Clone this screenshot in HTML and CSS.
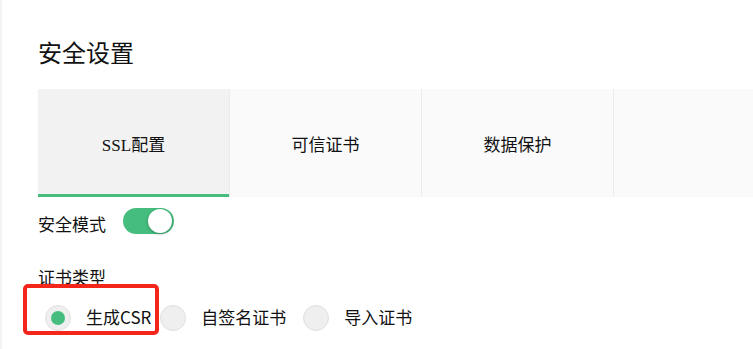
FILE: index.html
```html
<!DOCTYPE html>
<html lang="zh-CN">
<head>
<meta charset="utf-8">
<title>安全设置</title>
<link rel="stylesheet" href="styles.css">
</head>
<body>
<div class="page">
  <h1 class="title">安全设置</h1>
  <div class="tabs">
    <div class="tab active">SSL配置</div>
    <div class="tab">可信证书</div>
    <div class="tab">数据保护</div>
    <div class="tab"></div>
  </div>
  <div class="switch-row">
    <span class="label">安全模式</span>
    <span class="switch on"><span class="knob"></span></span>
  </div>
  <div class="section-label">证书类型</div>
  <div class="radios">
    <div class="radio first">
      <span class="dot checked"></span><span class="radio-text">生成CSR</span>
    </div>
    <div class="radio second">
      <span class="dot"></span><span class="radio-text">自签名证书</span>
    </div>
    <div class="radio">
      <span class="dot"></span><span class="radio-text">导入证书</span>
    </div>
    <div class="highlight"></div>
  </div>
</div>
</body>
</html>
```

FILE: styles.css
```css
html, body {
  margin: 0;
  padding: 0;
  background: #ffffff;
}

body {
  width: 753px;
  height: 349px;
  overflow: hidden;
}

.page {
  box-sizing: border-box;
  height: 349px;
  border-left: 2px solid #f3f3f3;
  padding: 36px 0 0 36px;
  color: #111111;
  font-family: "Noto Sans CJK SC", sans-serif;
}

.title {
  margin: 0;
  font-size: 24px;
  line-height: 32px;
  font-weight: normal;
  font-family: "Noto Sans CJK SC", sans-serif;
}

.tabs {
  margin-top: 21px;
  display: flex;
  height: 108px;
  overflow: hidden;
}

.tab {
  flex: 0 0 192px;
  box-sizing: border-box;
  height: 108px;
  border-right: 1px solid #ececec;
  background: #fafafa;
  display: flex;
  align-items: center;
  justify-content: center;
  font-size: 17px;
  font-family: "Liberation Serif", "Noto Sans CJK SC", serif;
  color: #111111;
}

.tab.active {
  background: #f2f2f2;
  box-shadow: inset 0 -3px 0 #45bd7e;
}

.switch-row {
  margin-top: 11px;
  display: flex;
  align-items: center;
  height: 26px;
}

.label {
  font-size: 17px;
  line-height: 24px;
  margin-top: 5px;
}

.switch {
  margin-left: 17px;
  box-sizing: border-box;
  width: 51px;
  height: 26px;
  border-radius: 13px;
  background: #45bd7e;
  padding: 1px 2px 1px 1px;
  display: flex;
  justify-content: flex-end;
}

.knob {
  width: 24px;
  height: 24px;
  border-radius: 50%;
  background: #ffffff;
  box-shadow: 0 1px 3px rgba(0, 0, 0, 0.3);
}

.section-label {
  margin-top: 31px;
  font-size: 17px;
  line-height: 24px;
}

.radios {
  position: relative;
  margin-top: 16px;
  display: flex;
  align-items: center;
  height: 26px;
  padding-left: 7px;
}

.radio {
  display: flex;
  align-items: center;
}

.radio.first {
  margin-right: 9px;
}

.radio.second {
  margin-right: 17px;
}

.dot {
  box-sizing: border-box;
  width: 26px;
  height: 26px;
  border-radius: 50%;
  border: 1px solid #e0e0e0;
  background: #efefef;
  display: flex;
  align-items: center;
  justify-content: center;
}

.dot.checked::after {
  content: "";
  width: 14px;
  height: 14px;
  border-radius: 50%;
  background: #45bd7e;
}

.radio-text {
  margin-left: 15px;
  margin-bottom: 2px;
  font-size: 17px;
  line-height: 24px;
}

.highlight {
  position: absolute;
  left: -15px;
  top: -21px;
  box-sizing: border-box;
  width: 136px;
  height: 51px;
  border: 4px solid #f4251b;
  border-radius: 5px;
}
```
